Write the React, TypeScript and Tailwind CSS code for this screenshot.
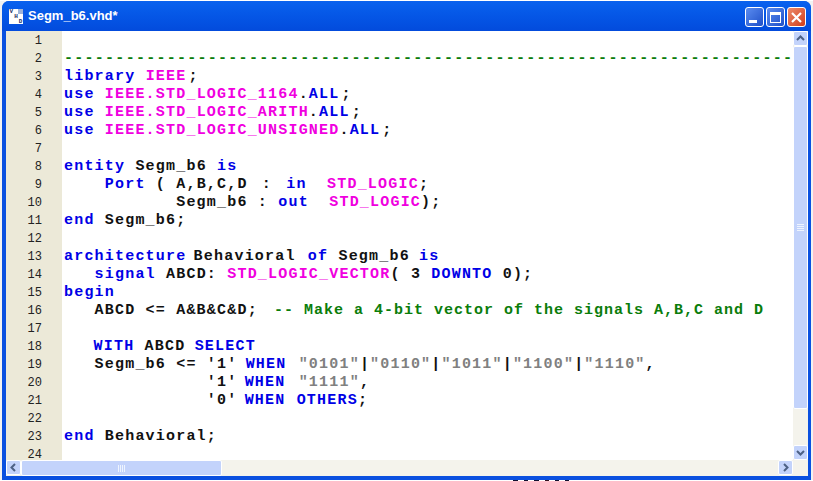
import type { ReactNode } from 'react'

type Tok = [string, string]

const K = 'text-[#0000e6]'
const P = 'text-[#f000e0]'
const T = 'text-[#111111]'
const C = 'text-[#0a7d0a]'
const S = 'text-[#808080]'

const lines: Tok[][] = [
  [],
  [[C + ' tracking-[1.27px]', '-'.repeat(71)]],
  [[K, 'library'], [T, ' '], [P, 'IEEE'], [T + ' ml-[2px]', ';']],
  [[K, 'use'], [T, ' '], [P, 'IEEE.STD_LOGIC_1164'], [T, '.'], [K, 'ALL'], [T + ' ml-[2px]', ';']],
  [[K, 'use'], [T, ' '], [P, 'IEEE.STD_LOGIC_ARITH'], [T, '.'], [K, 'ALL'], [T + ' ml-[2px]', ';']],
  [[K, 'use'], [T, ' '], [P, 'IEEE.STD_LOGIC_UNSIGNED'], [T, '.'], [K, 'ALL'], [T + ' ml-[2px]', ';']],
  [],
  [[K, 'entity'], [T, ' Segm_b6 '], [K, 'is']],
  [[T, '    '], [K, 'Port'], [T, ' ( A,B,C,D '], [T + ' ml-[4px]', ': '], [K + ' ml-[4px]', 'in'], [T, '  '], [P, 'STD_LOGIC'], [T, ';']],
  [[T, '           Segm_b6 : '], [K, 'out'], [T, '  '], [P, 'STD_LOGIC'], [T, ');']],
  [[K, 'end'], [T, ' Segm_b6;']],
  [],
  [[K, 'architecture'], [T + ' -ml-[3px]', ' Behavioral '], [K + ' ml-[2px]', 'of'], [T, ' Segm_b6 '], [K + ' -ml-[1px]', 'is']],
  [[T, '   '], [K, 'signal'], [T, ' ABCD: '], [P, 'STD_LOGIC_VECTOR'], [T, '( 3 '], [K, 'DOWNTO'], [T, ' 0);']],
  [[K, 'begin']],
  [[T, '   ABCD <= A&B&C&D; '], [C + ' ml-[6px] tracking-[1px]', '-- Make a 4-bit vector of the signals A,B,C and D']],
  [],
  [[T + ' -ml-[1px]', '   '], [K, 'WITH'], [T, ' ABCD '], [K + ' -ml-[1px]', 'SELECT']],
  [[T, "   Segm_b6 <= '1' "], [K + ' -ml-[2px]', 'WHEN'], [T, ' '], [S + ' ml-[2px]', '"0101"'], [T, '|'], [S, '"0110"'], [T, '|'], [S, '"1011"'], [T, '|'], [S, '"1100"'], [T, '|'], [S, '"1110"'], [T, ',']],
  [[T, "              '1' "], [K + ' -ml-[3px]', 'WHEN'], [T, ' '], [S + ' ml-[3px]', '"1111"'], [T, ',']],
  [[T, "              '0' "], [K + ' -ml-[3px]', 'WHEN'], [T, ' '], [K + ' ml-px', 'OTHERS'], [T, ';']],
  [],
  [[K, 'end'], [T, ' Behavioral;']],
  [],
]

function ScrollButton({ d }: { d: string }) {
  return (
    <div className="w-[15px] h-[15px] shrink-0 rounded-[2px] border border-white bg-[#c3d3fb] flex items-center justify-center">
      <svg width="9" height="9" viewBox="0 0 9 9" fill="none" stroke="#4d6185" strokeWidth="2">
        <path d={d} />
      </svg>
    </div>
  )
}

function Grip({ vertical }: { vertical?: boolean }) {
  const bars = [0, 1, 2, 3]
  return (
    <div className={vertical ? 'flex flex-col gap-px' : 'flex gap-px'}>
      {bars.map((b) => (
        <div key={b} className={vertical ? 'w-[7px] h-px bg-[#eef4fe]' : 'w-px h-[7px] bg-[#eef4fe]'} />
      ))}
    </div>
  )
}

function CaptionButton({ tone, children }: { tone: string; children: ReactNode }) {
  return (
    <div className={`w-[19px] h-[20px] rounded-[3px] border border-white flex ${tone}`}>
      {children}
    </div>
  )
}

export default function App() {
  return (
    <div className="w-[813px] h-[481px] overflow-hidden bg-[#f2f2f2] flex flex-col font-['Liberation_Sans',sans-serif]">
      <div className="h-px shrink-0 bg-white" />
      <div className="flex-1 min-h-0 ml-[2px] mr-[2px] flex flex-col rounded-t-[7px] bg-[#0a50e0]">
        {/* title bar */}
        <div className="h-[30px] shrink-0 flex items-center pl-[7px] pr-[5px] rounded-t-[7px] bg-gradient-to-b from-[#0a62ee] via-[#0556e6] to-[#034bdc]">
          <div className="w-[14px] h-[15px] bg-white grid grid-cols-3 grid-rows-3 text-[6px] leading-[5px] font-bold text-center text-[#1c2f66] font-['Liberation_Mono',monospace]">
            <span>V</span>
            <span />
            <span className="bg-[#9db3d8]" />
            <span />
            <span>H</span>
            <span />
            <span />
            <span />
            <span>D</span>
          </div>
          <span className="ml-[5px] mb-px text-[13px] font-bold text-white">Segm_b6.vhd*</span>
          <div className="ml-auto mt-[2px] flex gap-[2px]">
            <CaptionButton tone="bg-gradient-to-br from-[#5b8cf0] to-[#1f4fc8] items-end pb-[3px] justify-start pl-[3px]">
              <div className="w-[8px] h-[3px] bg-white" />
            </CaptionButton>
            <CaptionButton tone="bg-gradient-to-br from-[#5b8cf0] to-[#1f4fc8] items-center justify-center">
              <div className="w-[11px] h-[11px] border border-white border-t-[3px]" />
            </CaptionButton>
            <CaptionButton tone="bg-gradient-to-br from-[#ec8a6a] to-[#d13a15] items-center justify-center">
              <svg width="13" height="13" viewBox="0 0 13 13" stroke="white" strokeWidth="2.2">
                <path d="M2 2 11 11M11 2 2 11" />
              </svg>
            </CaptionButton>
          </div>
        </div>

        {/* client area */}
        <div className="flex-1 min-h-0 ml-[4px] mr-[3px] mb-[4px] flex flex-col bg-[#ece9d8]">
          <div className="flex-1 min-h-0 flex">
            <div className="w-[56px] shrink-0 bg-[#ece9d8] overflow-hidden pt-px text-[12px] leading-[18px] text-[#222222] font-['Liberation_Mono',monospace] pr-[20px] text-right">
              {lines.map((_, i) => (
                <div key={i} className="h-[18px]">{i + 1}</div>
              ))}
            </div>
            <div className="flex-1 min-w-0 bg-white overflow-hidden pt-px pl-[2px] whitespace-pre font-bold text-[15px] leading-[18px] tracking-[1.2px] font-['Liberation_Mono',monospace]">
              {lines.map((toks, i) => (
                <div key={i} className="h-[18px]">
                  {toks.map(([cls, text], j) => (
                    <span key={j} className={cls}>{text}</span>
                  ))}
                </div>
              ))}
            </div>
            <div className="w-[15px] shrink-0 flex flex-col bg-[#f4f3ec]">
              <ScrollButton d="M1 6 4.5 2.5 8 6" />
              <div className="flex-1 flex flex-col">
                <div className="h-[363px] rounded-[2px] border border-white bg-[#c3d3fb] flex items-center justify-center">
                  <Grip vertical />
                </div>
              </div>
              <ScrollButton d="M1 3 4.5 6.5 8 3" />
            </div>
          </div>
          <div className="h-[16px] shrink-0 flex pr-[15px] bg-[#f4f3ec]">
            <ScrollButton d="M6 1 2.5 4.5 6 8" />
            <div className="flex-1 flex">
              <div className="w-[201px] rounded-[2px] border border-white bg-[#c3d3fb] flex items-center justify-center">
                <Grip />
              </div>
            </div>
            <ScrollButton d="M3 1 6.5 4.5 3 8" />
          </div>
        </div>
      </div>
      {/* what shows of the page below the window */}
      <div className="h-px shrink-0 flex bg-white pl-[513px] gap-[6px]">
        <div className="w-[5px] bg-[#101030]" />
        <div className="w-[4px] bg-[#101030]" />
        <div className="w-[5px] bg-[#101030]" />
        <div className="w-[4px] bg-[#301020]" />
        <div className="w-[4px] bg-[#101030]" />
        <div className="w-[4px] bg-[#101030]" />
      </div>
    </div>
  )
}
